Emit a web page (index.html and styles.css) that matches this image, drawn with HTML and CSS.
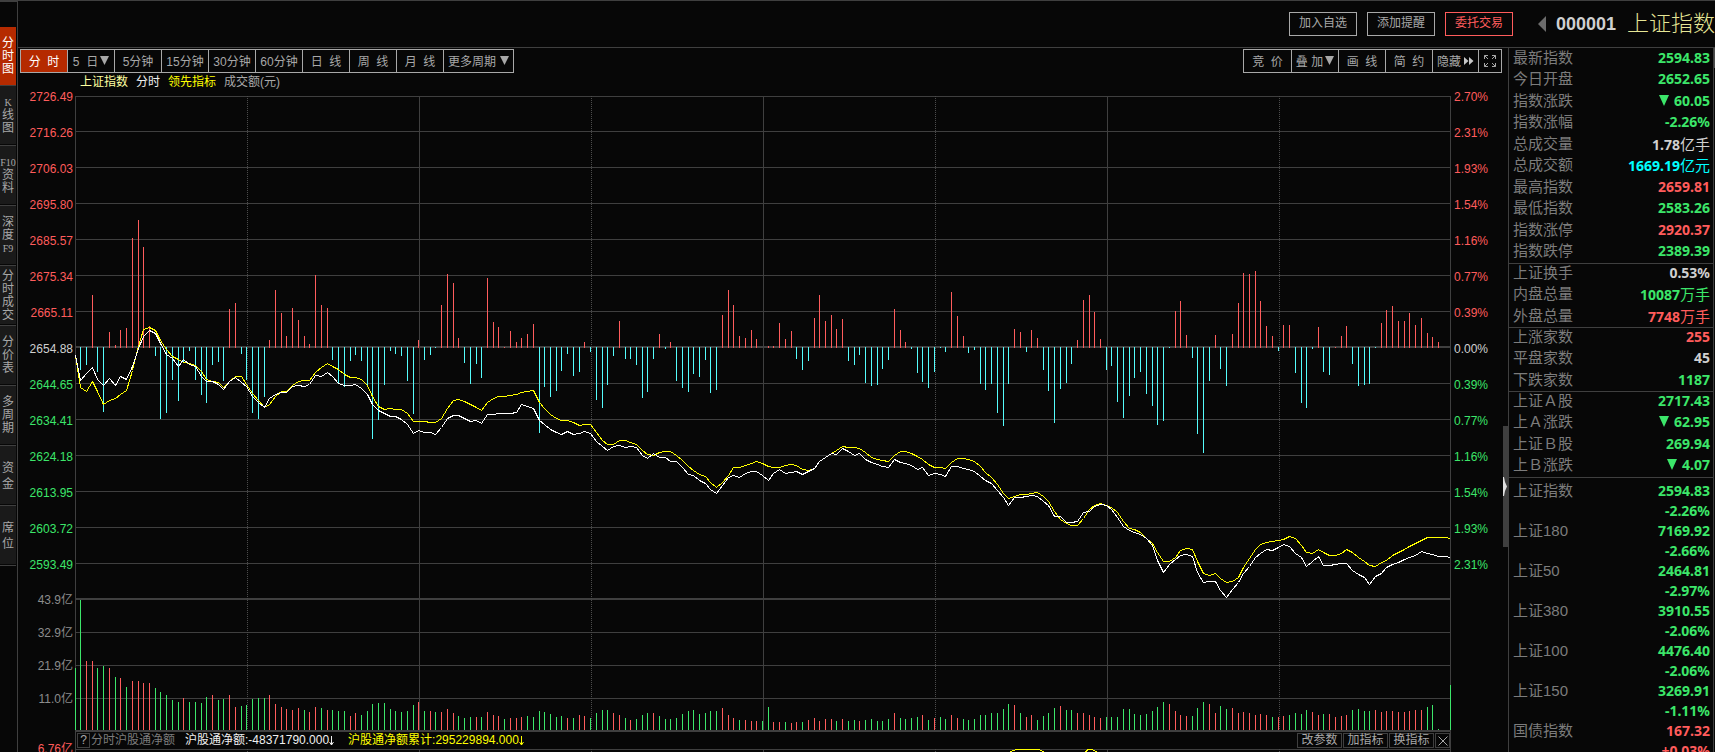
FILE: index.html
```html
<!DOCTYPE html>
<html lang="zh-CN">
<head>
<meta charset="utf-8">
<title>上证指数 000001</title>
<link rel="stylesheet" href="styles.css">
</head>
<body>
<div class="app">
  <nav class="side">
    <button class="side-tab active"><span>分</span><span>时</span><span>图</span></button>
    <button class="side-tab"><span class="latin">K</span><span>线</span><span>图</span></button>
    <button class="side-tab"><span class="latin">F10</span><span>资</span><span>料</span></button>
    <button class="side-tab"><span>深</span><span>度</span><span class="latin">F9</span></button>
    <button class="side-tab"><span>分</span><span>时</span><span>成</span><span>交</span></button>
    <button class="side-tab"><span>分</span><span>价</span><span>表</span></button>
    <button class="side-tab"><span>多</span><span>周</span><span>期</span></button>
    <button class="side-tab short"><span>资</span><span>金</span></button>
    <button class="side-tab short"><span>席</span><span>位</span></button>
  </nav>
  <main class="main">
    <header class="head">
      <div class="head-actions">
        <button class="act">加入自选</button>
        <button class="act">添加提醒</button>
        <button class="act hot">委托交易</button>
      </div>
      <div class="symbol">
        <svg class="prev" viewBox="0 0 8 16" aria-hidden="true"><path d="M8 0V16L0 8Z"/></svg>
        <span class="code">000001</span>
        <h1 class="name">上证指数</h1>
      </div>
    </header>
    <div class="body">
      <section class="chart-area">
        <div class="toolbar">
          <div class="group">
            <button class="tool on">分&nbsp; 时</button>
            <button class="tool">5&nbsp; 日<svg class="tri" viewBox="0 0 9 9"><path d="M0 0H9L4.500 9Z"/></svg></button>
            <button class="tool">5分钟</button>
            <button class="tool">15分钟</button>
            <button class="tool">30分钟</button>
            <button class="tool">60分钟</button>
            <button class="tool">日&nbsp; 线</button>
            <button class="tool">周&nbsp; 线</button>
            <button class="tool">月&nbsp; 线</button>
            <button class="tool wide">更多周期<svg class="tri gap" viewBox="0 0 9 9"><path d="M0 0H9L4.500 9Z"/></svg></button>
          </div>
          <div class="group">
            <button class="tool first">竞&nbsp; 价</button>
            <button class="tool">叠 加<svg class="tri" viewBox="0 0 9 9"><path d="M0 0H9L4.500 9Z"/></svg></button>
            <button class="tool">画&nbsp; 线</button>
            <button class="tool">简&nbsp; 约</button>
            <button class="tool hide">隐藏<svg class="ff" viewBox="0 0 10 8"><path d="M0 0L4.500 4L0 8ZM5 0L9.500 4L5 8Z"/></svg></button>
            <button class="tool small" aria-label="全屏"><svg class="full" viewBox="0 0 12 12"><path d="M.5 4V.5H4M.5 .5L4 4M8 .5H11.500V4M11.500 .5L8 4M.5 8V11.500H4M.5 11.500L4 8M8 11.500H11.500V8M11.500 11.500L8 8"/></svg></button>
          </div>
        </div>
        <div class="chart">
          <div class="axis left" id="axis-left"></div>
          <div class="plot">
            <div class="caption">
              <span class="c-pale">上证指数</span><span class="c-white">分时</span><span class="c-yellow">领先指标</span><span class="c-gray">成交额(元)</span>
            </div>
            <svg class="canvas" id="canvas" viewBox="0 0 1376 636" preserveAspectRatio="none" role="img" aria-label="上证指数分时走势"></svg>
            <div class="indicator">
              <button class="mini help">?</button>
              <span class="c-dim">分时沪股通净额</span>
              <span class="c-white flow">沪股通净额:-48371790.000<svg class="down" viewBox="0 0 5 10"><path d="M2.500 0V9M.5 6L2.500 9L4.500 6"/></svg></span>
              <span class="c-yellow flow">沪股通净额累计:295229894.000<svg class="down" viewBox="0 0 5 10"><path d="M2.500 0V9M.5 6L2.500 9L4.500 6"/></svg></span>
              <span class="fill"></span>
              <button class="mini">改参数</button>
              <button class="mini">加指标</button>
              <button class="mini">换指标</button>
              <button class="mini close" aria-label="关闭"><svg viewBox="0 0 10 10"><path d="M.5 .5L9.500 9.500M9.500 .5L.5 9.500"/></svg></button>
            </div>
            <svg class="next" id="next" viewBox="0 0 1376 30" preserveAspectRatio="none" aria-hidden="true"></svg>
          </div>
          <div class="axis right" id="axis-right"></div>
        </div>
        <button class="splitter" aria-label="收起侧栏"><svg viewBox="0 0 4 19"><path d="M0 0H1L2 5L4 9.500L2 14L1 19H0Z"/></svg></button>
      </section>
      <aside class="quote">
        <table class="stats">
          <tbody>
            <tr><th>最新指数</th><td class="g">2594.83</td></tr>
            <tr><th>今日开盘</th><td class="g">2652.65</td></tr>
            <tr><th>指数涨跌</th><td class="g"><i class="fall"></i>60.05</td></tr>
            <tr><th>指数涨幅</th><td class="g">-2.26%</td></tr>
            <tr><th>总成交量</th><td class="w">1.78<b>亿手</b></td></tr>
            <tr><th>总成交额</th><td class="c">1669.19<b>亿元</b></td></tr>
            <tr><th>最高指数</th><td class="r">2659.81</td></tr>
            <tr><th>最低指数</th><td class="g">2583.26</td></tr>
            <tr><th>指数涨停</th><td class="r">2920.37</td></tr>
            <tr><th>指数跌停</th><td class="g">2389.39</td></tr>
          </tbody>
          <tbody>
            <tr><th>上证换手</th><td class="w">0.53%</td></tr>
            <tr><th>内盘总量</th><td class="g">10087<b>万手</b></td></tr>
            <tr><th>外盘总量</th><td class="r">7748<b>万手</b></td></tr>
          </tbody>
          <tbody>
            <tr><th>上涨家数</th><td class="r">255</td></tr>
            <tr><th>平盘家数</th><td class="w">45</td></tr>
            <tr><th>下跌家数</th><td class="g">1187</td></tr>
          </tbody>
          <tbody>
            <tr><th>上证Ａ股</th><td class="g">2717.43</td></tr>
            <tr><th>上Ａ涨跌</th><td class="g"><i class="fall"></i>62.95</td></tr>
            <tr><th>上证Ｂ股</th><td class="g">269.94</td></tr>
            <tr><th>上Ｂ涨跌</th><td class="g"><i class="fall"></i>4.07</td></tr>
          </tbody>
        </table>
        <table class="indices">
          <tbody>
            <tr><th>上证指数</th><td class="g">2594.83<br>-2.26%</td></tr>
            <tr><th>上证180</th><td class="g">7169.92<br>-2.66%</td></tr>
            <tr><th>上证50</th><td class="g">2464.81<br>-2.97%</td></tr>
            <tr><th>上证380</th><td class="g">3910.55<br>-2.06%</td></tr>
            <tr><th>上证100</th><td class="g">4476.40<br>-2.06%</td></tr>
            <tr><th>上证150</th><td class="g">3269.91<br>-1.11%</td></tr>
            <tr><th>国债指数</th><td class="r">167.32<br>+0.03%</td></tr>
          </tbody>
        </table>
      </aside>
      <div class="scroll"></div>
    </div>
  </main>
</div>
<script src="chart.js"></script>
</body>
</html>
```
FILE: chart.js
```js
// Minute-by-minute series of one trading day: 241 points, index 0 = 09:30.

// Strength bars above (+) and below (-) the zero line.
const strength = [
  0,-23,-18,53,-25,-65,16,3,18,20,110,128,101,22,-9,-72,-66,-33,-54,-15,
  -4,-33,-48,-56,-18,-15,-34,39,45,-7,-33,-66,-72,-50,8,58,35,12,40,28,
  12,4,73,43,40,-13,-37,-40,-14,-8,-14,-38,-92,-73,-38,-4,-7,-9,-34,-67,
  8,-13,-8,-1,43,74,65,10,-16,-37,-17,-31,70,26,21,1,17,6,10,14,
  24,-86,-40,-50,-44,-24,-7,-29,-25,6,-5,-53,-61,-38,-9,27,-12,-12,-18,-51,
  -45,-12,14,-2,6,-34,-41,-45,-27,-30,-13,-46,-43,33,58,43,12,10,18,9,
  0,2,2,25,9,17,-12,-23,-14,30,53,27,33,19,29,-14,-18,-8,-36,-39,
  -38,-22,-13,39,18,6,-2,-26,-35,-41,-25,-1,-5,56,32,12,-6,-3,-37,-43,
  -37,-66,-79,-37,19,16,-5,18,10,-23,-44,-76,-42,-36,-17,8,48,53,36,9,
  -23,-19,-55,-71,-49,-31,-25,-47,-59,-78,-74,-1,37,47,13,-11,-87,-106,-34,13,
  -22,-39,14,45,75,74,77,47,22,12,-4,23,23,-26,-56,-61,-2,21,-25,-28,
  1,12,22,-17,-39,-38,-37,-1,25,38,42,27,27,35,23,30,15,11,6,0,0
];

// Turnover bars: positive = falling minute (green), negative = rising minute (red).
const turnover = [
  62,130,-69,-69,62,64,-62,53,-52,43,-49,-49,-47,-47,42,38,35,30,28,-32,
  28,28,27,33,-35,30,31,-35,-23,24,25,31,32,32,-35,-26,-23,-21,-20,-22,
  20,-18,-23,22,-20,20,19,19,-14,-17,15,19,26,27,27,21,19,18,19,25,
  -28,19,-19,18,-18,-21,-17,14,12,13,-13,13,-18,-15,-14,11,-12,-12,-13,14,
  13,19,18,16,13,14,-12,12,-15,-14,12,17,20,20,-17,-15,12,-10,11,15,
  17,-17,14,11,11,12,16,19,20,16,17,19,19,-22,-15,-12,10,-10,-9,-9,
  9,23,-8,-8,8,-7,-8,8,-10,-12,-9,-11,-11,9,-11,9,10,-9,10,11,
  9,9,11,-17,12,11,12,13,-15,10,-12,13,11,-15,-12,11,10,11,15,15,
  17,17,21,26,-25,17,-13,-15,10,14,17,22,-24,20,20,-17,-17,-15,-13,-12,
  13,13,13,21,21,16,15,16,19,23,28,-26,-19,-15,-14,14,22,28,-26,-17,
  24,21,-22,-17,-18,-17,-15,-16,-15,13,-13,-14,15,17,16,20,-18,-15,16,-16,
  -13,-14,-15,20,21,19,19,-20,-18,-19,-19,-18,-18,-19,-20,-20,23,25,1,0,45
];

// Line depths, in thirds of a unit, split where the base level changes.
const price = [
  { base: 582, y: [
    195,272,250,233,268,285,264,287,258,267,228,175,138,121,130,160,192,204,228,207,
    222,229,258,273,274,284,297,273,263,276,288,318,337,352,326,314,307,307,288,286,
    290,284,256,258,248,258,280,286,286,284,294,314,343,361,369,379,380,387,404,430,
    422,427,428,433,412,385,376,377,384,394,392] },
  { base: 462, y: [
    520,493,493,490,490,490,487,463,469,476,510,524,537,547,553,544,553,550,544,551,
    575,589,601,589,586,592,589,592,616,625,611,622,622,634,634,652,672,677,690,699,
    718,730,706,682,676,682,670,664,664,676,690,670,658,670,667,664,673,664,655,634,
    623,610,613,595,604,616,610,628,637,643,649,652,628,637,640,645,658,652,677,670,
    673,679,649,649,655,659,664,678,690,700,722,742,767,742,742,739,736,739,754,767,
    799,799,817,817,814,788,784,770,763,767,777,802,828,841,848,854,866,886,930,967,
    943,928,915,912,918,966,997,994,994,1021,1042,1017,996,970,948,922,909,898,901,891,
    883,890,910,923,948,934,919,946,946,943,940,940,961,972,981,1002,979,969,952,943,
    937,928,921,915,904,909,913,918,919,922] }
];
const leading = [
  { base: 582, y: [
    195,293,304,274,305,342,332,325,313,300,240,170,118,112,121,151,179,198,209,217,
    219,227,245,268,274,278,291,273,260,260,283,309,332,352,343,320,305,304,287,275,
    271,270,247,233,220,228,238,252,262,263,268,285,320,348,358,355,357,359,370,394,
    394,394,397,397,386,356,332,327,335,344,352] },
  { base: 462, y: [
    481,457,445,438,438,436,433,427,424,421,456,476,493,504,511,511,517,526,523,524,
    548,571,583,583,571,571,576,583,601,613,616,607,604,604,617,630,649,662,673,680,
    696,712,698,675,652,652,646,640,634,640,649,652,652,646,643,646,657,662,655,634,
    623,610,601,589,592,592,595,606,621,628,631,634,616,604,604,609,619,628,643,652,
    652,655,638,625,625,628,634,649,668,682,704,730,745,739,734,733,730,727,739,754,
    785,807,820,826,826,805,779,766,760,766,773,788,814,834,838,847,866,880,907,934,
    934,922,902,895,898,934,969,976,970,986,997,994,983,953,926,898,884,877,874,872,
    868,859,866,886,907,910,898,907,916,916,911,898,908,923,934,946,949,938,930,915,
    907,898,889,879,871,862,862,862,862,865] }
];

const xAt = i => Math.floor(i * 1375 / 240);
const rect = (cls, x, y, w, h) => `<rect class="${cls}" x="${x}" y="${y}" width="${w}" height="${h}"/>`;

function verticals(top, bottom) {
  let out = '';
  [0, 172, 344, 516, 688, 860, 1032, 1204, 1375].forEach((x, n) => {
    const dotted = n % 2 === 1;
    out += `<line class="${dotted ? 'dots' : 'rule'}" x1="${x + 0.5}" x2="${x + 0.5}" y1="${top}" y2="${bottom}"/>`;
  });
  return out;
}

function polyline(cls, parts) {
  const ys = parts.flatMap(p => p.y.map(v => Math.floor((v + p.base) / 3)));
  return `<polyline class="${cls}" points="${ys.map((y, i) => `${xAt(i) + 0.5},${y + 0.5}`).join(' ')}"/>`;
}

let svg = '';
[0, 35, 71, 107, 143, 179, 215, 287, 323, 359, 395, 431, 467, 536, 569, 602]
  .forEach(y => { svg += rect('grid', 0, y, 1376, 1); });
[250, 502, 634].forEach(y => { svg += rect('grid', 0, y, 1376, 2); });
svg += verticals(0, 634);
strength.forEach((v, i) => {
  if (v > 0) svg += rect('up', xAt(i), 252 - v, 1, v);
  if (v < 0) svg += rect('weak', xAt(i), 251, 1, -v);
});
turnover.forEach((v, i) => {
  if (v) svg += rect(v > 0 ? 'down-bar' : 'up', xAt(i), 634 - Math.abs(v), 1, Math.abs(v));
});
svg += polyline('line-yellow', leading) + polyline('line-white', price);
document.getElementById('canvas').innerHTML = svg;

document.getElementById('next').innerHTML =
  rect('grid', 0, 0, 1376, 1) + verticals(0, 30) +
  '<polyline class="line-yellow" points="932,6 936,2.5 938,1.500 942,0.5 964,0.5 968,2.5 972,6"/>' +
  '<polyline class="line-yellow" points="1008,6 1011,2.5 1013,0.5 1017,0.5 1021,2.5 1024,6"/>';

const tone = n => n < 7 ? 'r' : n === 7 ? 'w' : 'g';
const prices = ['2726.49','2716.26','2706.03','2695.80','2685.57','2675.34','2665.11','2654.88','2644.65','2634.41','2624.18','2613.95','2603.72','2593.49'];
const percents = ['2.70%','2.31%','1.93%','1.54%','1.16%','0.77%','0.39%','0.00%','0.39%','0.77%','1.16%','1.54%','1.93%','2.31%'];
const ticks = list => list.map((t, n) => `<span class="tick ${tone(n)}">${t}</span>`).join('');
document.getElementById('axis-left').innerHTML = ticks(prices) +
  ['43.9亿','32.9亿','21.9亿','11.0亿'].map(t => `<span class="tick vol">${t}</span>`).join('') +
  '<span class="tick flow-top r">6.76亿</span>';
document.getElementById('axis-right').innerHTML = ticks(percents);
```
FILE: styles.css
```css
* { box-sizing: border-box; }

html, body { margin: 0; height: 100%; background: #070707; }

body {
  font-family: "Liberation Sans", "Noto Sans CJK SC", sans-serif;
  font-size: 12px;
  color: #a8a8a8;
  overflow: hidden;
}

button {
  margin: 0;
  padding: 0;
  background: none;
  border: 1px solid #a8a8a8;
  color: inherit;
  font: inherit;
  white-space: nowrap;
}

svg { display: block; }

.app { display: flex; height: 100vh; }

/* side tabs */
.side {
  flex: none;
  width: 18px;
  padding: 25px 1px 0 0;
  border-right: 1px solid #3f3f3f;
  border-top: 2px solid #3f3f3f;
}
.side-tab {
  display: flex;
  flex-direction: column;
  align-items: center;
  justify-content: center;
  width: 100%;
  height: 60px;
  border: 0;
  border-bottom: 1px solid #3f3f3f;
  box-shadow: inset 0 -1px #070707;
  background: #1a1a1a;
  font-family: "Liberation Serif", "Noto Sans CJK SC", serif;
  font-size: 12px;
  line-height: 13px;
}
.side-tab.short { line-height: 16px; }
.side-tab.active { height: 59px; background: #b52a00; color: #fff; box-shadow: none; }
.side-tab .latin { font-size: 10px; }

.main {
  flex: 1;
  min-width: 0;
  display: flex;
  flex-direction: column;
  border-top: 1px solid #3f3f3f;
}

/* header */
.head {
  flex: none;
  display: flex;
  justify-content: flex-end;
  align-items: center;
  height: 47px;
  border-bottom: 1px solid #3f3f3f;
}
.head-actions { display: flex; gap: 10px; margin-right: 25px; }
.act { width: 68px; height: 24px; line-height: 20px; padding-bottom: 2px; }
.act.hot { border-color: #ff5c5c; color: #ff5c5c; }
.symbol {
  display: flex;
  align-items: center;
  width: 177px;
  overflow: hidden;
  white-space: nowrap;
}
.prev { flex: none; width: 8px; height: 16px; fill: #6c6c6c; }
.code { margin: 0 11px 0 10px; color: #d0d0d0; font-size: 18px; font-weight: bold; }
.name { margin: 0; color: #e6e696; font-size: 22px; font-weight: 300; line-height: 30px; }

.body { flex: 1; min-height: 0; display: flex; }

/* chart column */
.chart-area {
  position: relative;
  flex: 1;
  min-width: 0;
  overflow: hidden;
}
.toolbar {
  display: flex;
  justify-content: space-between;
  height: 25px;
  padding: 1px 6px 0 2px;
}
.group { display: flex; }
.tool {
  display: flex;
  align-items: center;
  justify-content: center;
  width: 48px;
  height: 24px;
  margin-right: -1px;
  padding-bottom: 1px;
}
.tool.on { background: #b52a00; color: #fff; }
.tool.first { width: 49px; }
.tool.hide { width: 47px; }
.tool.wide { width: 71px; }
.tool.small { width: 24px; margin-right: 0; }
.tri { width: 9px; height: 9px; margin-left: 2px; fill: #a8a8a8; }
.tri.gap { margin-left: 4px; }
.ff { width: 10px; height: 8px; margin-left: 3px; fill: #c8c8c8; }
.full { width: 12px; height: 12px; fill: none; stroke: #a8a8a8; }

.chart {
  display: grid;
  grid-template-columns: 57px 1fr 57px;
}
.axis { display: flex; flex-direction: column; padding-top: 6px; }
.axis.left { text-align: right; padding-right: 2px; }
.axis.right { padding-left: 3px; }
.tick { height: 36px; line-height: 36px; white-space: nowrap; }
.tick.vol { height: 33px; line-height: 35px; color: #8c8c8c; }
.tick.flow-top { margin-top: 16px; }

.plot { min-width: 0; }
.caption {
  display: flex;
  gap: 8px;
  height: 23px;
  padding-left: 5px;
  line-height: 19px;
}
.canvas { width: 100%; height: 636px; shape-rendering: crispEdges; }
.next { width: 100%; height: 30px; shape-rendering: crispEdges; }
.grid { fill: #3f3f3f; }
.rule { stroke: #3f3f3f; }
.dots { stroke: #4c4c4c; stroke-dasharray: 1 1; }
.up { fill: #ff5c5c; }
.weak { fill: #54fcfc; }
.down-bar { fill: #3ce66a; }
.line-white, .line-yellow { fill: none; stroke-width: 1; }
.line-white { stroke: #fff; }
.line-yellow { stroke: #ff0; }

.indicator {
  display: flex;
  align-items: center;
  height: 17px;
  border-left: 1px solid #3f3f3f;
  border-right: 1px solid #3f3f3f;
  line-height: 17px;
  white-space: nowrap;
}
.mini { width: 45px; height: 15px; margin-left: 1px; border-color: #3f3f3f; line-height: 13px; }
.mini.help { width: 13px; }
.mini.close { display: flex; align-items: center; justify-content: center; width: 15px; }
.mini.close svg { width: 10px; height: 10px; stroke: #a8a8a8; }
.indicator .c-dim { margin-left: 1px; }
.flow { display: flex; align-items: center; margin-left: 10px; }
.flow + .flow { margin-left: 14px; }
.down { width: 5px; height: 10px; fill: none; stroke: currentColor; }
.fill { flex: 1; }

.splitter {
  position: absolute;
  right: 0;
  top: 378px;
  display: flex;
  align-items: center;
  width: 5px;
  height: 121px;
  border: 0;
  background: #3f3f3f;
}
.splitter svg { width: 4px; height: 19px; fill: #e0e0e0; }

/* quote column */
.quote {
  flex: none;
  width: 206px;
  padding: 1px 0 0;
  overflow: hidden;
  border-left: 1px solid #3f3f3f;
  border-right: 1px solid #3f3f3f;
}
.quote table { width: 100%; border-collapse: separate; border-spacing: 0; }
.quote th {
  padding: 0 0 0 4px;
  color: #7c7c7c;
  font-size: 15px;
  font-weight: normal;
  text-align: left;
  vertical-align: top;
}
.quote td {
  padding: 0 3px 0 0;
  font-family: "Noto Sans", "Noto Sans CJK SC", sans-serif;
  font-size: 14px;
  font-weight: bold;
  text-align: right;
  vertical-align: top;
}
.quote b { font-size: 15px; font-weight: normal; }
.stats th, .stats td { height: 21px; line-height: 18px; }
.stats tr:nth-child(even) > * { height: 22px; }
.stats tr:last-child > * { border-bottom: 1px solid #3f3f3f; }
.indices { margin-top: 3px; }
.indices th, .indices td { line-height: 20px; }
.fall {
  display: inline-block;
  margin-right: 5px;
  border: 5px solid transparent;
  border-top: 11px solid #3ce66a;
  border-bottom: 0;
}

.scroll { flex: none; width: 1px; height: 20px; background: #4c4c4c; }

.r { color: #ff5c5c; }
.g { color: #3ce66a; }
.w { color: #d0d0d0; }
.c { color: #0ff; }
.c-pale { color: #ffffa0; }
.c-white { color: #f0f0f0; }
.c-yellow { color: #ff0; }
.c-gray { color: #a8a8a8; }
.c-dim { color: #7c7c7c; }
```
